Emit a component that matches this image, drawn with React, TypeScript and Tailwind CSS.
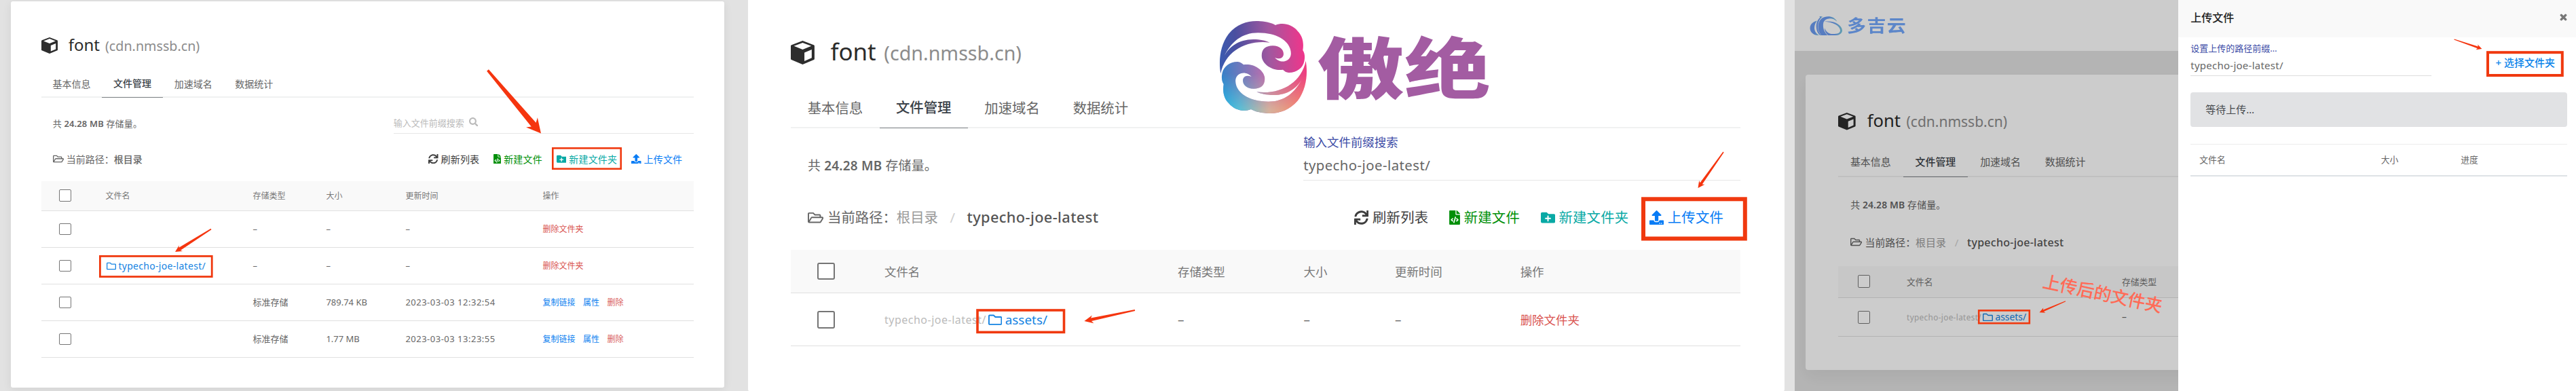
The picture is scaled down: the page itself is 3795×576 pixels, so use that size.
import type { ReactNode } from 'react'
import {
  FaFileCode,
  FaFolderPlus,
  FaRegFolder,
  FaRegFolderOpen,
  FaSearch,
  FaSync,
  FaTimes,
  FaUpload,
} from 'react-icons/fa'
import { clsx } from 'clsx'

const tabs = ['基本信息', '文件管理', '加速域名', '数据统计']
const columns = ['文件名', '存储类型', '大小', '更新时间', '操作']

interface FileRow {
  name?: string
  prefix?: string
  type: string
  size: string
  time: string
  folder: boolean
}

const rootRows: FileRow[] = [
  { type: '–', size: '–', time: '–', folder: true },
  { name: 'typecho-joe-latest/', type: '–', size: '–', time: '–', folder: true },
  { type: '标准存储', size: '789.74 KB', time: '2023-03-03 12:32:54', folder: false },
  { type: '标准存储', size: '1.77 MB', time: '2023-03-03 13:23:55', folder: false },
]

const nestedRows: FileRow[] = [
  { prefix: 'typecho-joe-latest/', name: 'assets/', type: '–', size: '–', time: '–', folder: true },
]

export default function App() {
  return (
    <div className="relative flex h-[576px] w-[3795px] overflow-hidden bg-[#e2e2e2] font-['Noto_Sans','Noto_Sans_CJK_SC',sans-serif] text-[#666]">
      <section className="w-[1102px] pl-[16.4px] pt-[2px]">
        <div className="h-[569px] w-[1050.4px] rounded-[3px] bg-white shadow-[0_3px_14px_rgba(0,0,0,0.07)]">
          <div className="pl-[44.3px] pt-[53px]">
            <Bucket rows={rootRows} />
          </div>
        </div>
      </section>

      <section className="w-[1542px]">
        <div className="h-[577px] w-[1527px] rounded-b-[4px] bg-white">
          <div className="pl-[43.5px] pt-[41.2px] [zoom:1.4545]">
            <Bucket rows={nestedRows} nested />
          </div>
        </div>
      </section>

      <section className="relative h-full w-[565.3px] overflow-hidden">
        <header className="flex h-[74.7px] items-center bg-white pl-[22px]">
          <CloudLogo />
          <span className="ml-[6px] scale-y-[0.9] text-[28px] font-bold leading-none tracking-[1.4px] text-[#74a8fc]">
            多吉云
          </span>
        </header>
        <div className="mt-[35.3px] ml-[16px] h-[435px] w-[600px] rounded-[4px] bg-white shadow-[0_10px_24px_rgba(0,0,0,0.06)]">
          <div className="pl-[45px] pt-[52.5px] [zoom:1.067]">
            <Bucket rows={nestedRows} nested narrow />
          </div>
        </div>
        <div className="absolute inset-0 bg-black/20" />
      </section>

      <UploadDrawer />

      <div className="absolute left-[1796px] top-[30px] flex">
        <SwirlLogo />
        <span className="ml-[14px] mt-[20px] h-[98px] w-[260px] origin-left scale-x-[1.31] whitespace-nowrap text-[98px] font-black leading-[98px] text-[#a35ca2]">
          傲绝
        </span>
      </div>

      <Marks />
      <span className="absolute left-[3008px] top-[417px] rotate-[12deg] whitespace-nowrap text-[25.6px] font-medium leading-[32px] text-[#ff6b57]">
        上传后的文件夹
      </span>
    </div>
  )
}

interface BucketProps {
  rows: FileRow[]
  nested?: boolean
  narrow?: boolean
}

function Bucket({ rows, nested, narrow }: BucketProps) {
  return (
    <div className="w-[961.5px]">
      <div className="flex h-[24px] items-center">
        <CubeIcon />
        <h1 className="ml-[16px] flex items-baseline gap-[8px] text-[24px] leading-[24px] text-[#2b2b2b]">
          font
          <small className="text-[19.7px] text-[#8c8c8c]">(cdn.nmssb.cn)</small>
        </h1>
      </div>

      <nav className="mt-[24px] flex h-[41px] border-b-2 border-[#f0f1f1]">
        {tabs.map((tab, i) => (
          <span
            key={tab}
            className={clsx(
              'flex h-[41px] w-[89.6px] items-center justify-center pb-px text-[14px]',
              i === 1 ? 'border-b border-[#808488] font-medium text-[#3b4249]' : 'text-[#666]',
            )}
          >
            {tab}
          </span>
        ))}
      </nav>

      <div className="flex h-[72px]">
        <p className="w-[519px] pl-[17px] pt-[28px] text-[13px] leading-[20px] tracking-[0.15px]">
          共 <b className="font-semibold">24.28 MB</b> 存储量。
        </p>
        {!narrow && <SearchBox value={nested ? 'typecho-joe-latest/' : undefined} />}
      </div>

      <div className="flex h-[36px] items-center justify-between px-[17px] text-[14px]">
        <div className="flex items-center">
          <FaRegFolderOpen className="mr-[4px] h-[16px] w-[16px]" />
          当前路径：
          {nested ? (
            <>
              <span className="text-[#9a9a9a]">根目录</span>
              <span className="mx-[12px] text-[#d0d0d0]">/</span>
              <span className="text-[15px] font-medium tracking-[0.25px] text-[#555]">typecho-joe-latest</span>
            </>
          ) : (
            <span className="font-medium">根目录</span>
          )}
        </div>
        {!narrow && (
          <div className="flex gap-[21px]">
            <Action icon={<FaSync className="size-[14.5px]" />} label="刷新列表" className="text-[#3e3e3e]" />
            <Action icon={<FaFileCode className="h-[14.5px] w-[11px]" />} label="新建文件" className="text-[#008f08]" />
            <Action icon={<FaFolderPlus className="size-[14.5px]" />} label="新建文件夹" className="text-[#08a9a5]" />
            <Action icon={<FaUpload className="size-[14.5px]" />} label="上传文件" className="text-[#087cf5]" />
          </div>
        )}
      </div>

      <div className="mt-[15px]">
        <Row nested={nested} className="h-[43.5px] bg-[#f9f9f9] text-[12px] text-[#777]">
          {columns.slice(0, narrow ? 2 : 5).map((c) => (
            <span key={c} className="pt-[1px]">{c}</span>
          ))}
        </Row>
        {rows.map((row, i) => (
          <Row key={i} nested={nested} className="h-[54px] pt-[1px] text-[13px]">
            <span className="flex items-center whitespace-nowrap">
              {row.prefix && <span className="w-[105.2px] text-[11px] tracking-[0.35px] text-[#bbb]">{row.prefix}</span>}
              {row.name && (
                <span
                  className={clsx(
                    'flex items-center gap-[3px] text-[#1583e2]',
                    row.prefix ? 'text-[13px]' : 'pl-[2px] text-[14px] tracking-[0.3px]',
                  )}
                >
                  <FaRegFolder className="size-[14px]" />
                  {row.name}
                </span>
              )}
            </span>
            <span>{row.type}</span>
            {!narrow && (
              <>
                <span>{row.size}</span>
                <span className="tracking-[0.5px]">{row.time}</span>
                {row.folder ? (
                  <span className="text-[12px] text-[#d9534f]">删除文件夹</span>
                ) : (
                  <span className="flex gap-[11.5px] text-[12px] text-[#0b7ff0]">
                    <a>复制链接</a>
                    <a>属性</a>
                    <a className="text-[#d9605c]">删除</a>
                  </span>
                )}
              </>
            )}
          </Row>
        ))}
      </div>
    </div>
  )
}

function Row({ nested, className, children }: { nested?: boolean; className: string; children: ReactNode }) {
  return (
    <div
      className={clsx(
        'grid items-center border-b border-[#e0e0e0]',
        nested ? 'grid-cols-[94.7px_297px_127.6px_92.4px_127px_1fr]' : 'grid-cols-[94.7px_217px_108px_117px_202px_1fr]',
        className,
      )}
    >
      <span className="ml-[26.8px] size-[17.6px] rounded-[2px] border-[1.6px] border-[#757575] bg-white" />
      {children}
    </div>
  )
}

function SearchBox({ value }: { value?: string }) {
  if (value) {
    return (
      <div className="h-[53px] flex-1 border-b border-[#e6e6e6] pt-[4px] leading-[20px]">
        <label className="block text-[12px] text-[#3c4ba6]">输入文件前缀搜索</label>
        <p className="mt-[3px] text-[14px] tracking-[0.3px]">{value}</p>
      </div>
    )
  }
  return (
    <div className="flex h-[53px] flex-1 items-start gap-[7px] border-b border-[#e6e6e6] pt-[26.5px] text-[13px] leading-[20px] text-[#bbb]">
      输入文件前缀搜索
      <FaSearch className="mt-[2px] size-[13.5px]" />
    </div>
  )
}

function Action({ icon, label, className }: { icon: ReactNode; label: string; className: string }) {
  return (
    <span className={clsx('flex items-center gap-[4px] whitespace-nowrap tracking-[0.15px]', className)}>
      {icon}
      {label}
    </span>
  )
}

function UploadDrawer() {
  return (
    <aside className="h-full flex-1 bg-white">
      <header className="flex h-[54.7px] items-center justify-between bg-[#f9f9f9] pb-[3px] pl-[18px] pr-[12px]">
        <h2 className="text-[16px] font-medium text-[#222]">上传文件</h2>
        <FaTimes className="size-[13px] stroke-[#777] stroke-[40px] text-[#777]" />
      </header>
      <div className="pl-[18px] pr-[13px]">
        <div className="flex h-[81px] justify-between">
          <div className="h-[57.5px] w-[354.5px] border-b border-[#ddd] pt-[6px] leading-[20px]">
            <label className="block text-[13px] text-[#3c4ba6]">设置上传的路径前缀…</label>
            <p className="mt-[5px] text-[15px] tracking-[0.25px]">typecho-joe-latest/</p>
          </div>
          <button className="mt-[19px] h-[38px] self-start pr-[18px] text-[15px] font-medium text-[#0b84ea]">
            + 选择文件夹
          </button>
        </div>
        <div className="flex h-[51.3px] items-center rounded-[4px] bg-[#e1e2e4] pl-[22px] text-[15px] text-[#45494d]">
          等待上传…
        </div>
        <div className="mt-[25px] grid h-[48px] grid-cols-[267.5px_117.5px_1fr] items-center border-b-2 border-t border-b-[#dee2e6] border-t-[#ececec] pl-[13px] text-[12.8px]">
          <span>文件名</span>
          <span>大小</span>
          <span>进度</span>
        </div>
      </div>
    </aside>
  )
}

function CubeIcon() {
  return (
    <svg viewBox="0 0 24 24" className="size-[24px] shrink-0" fill="#2d2d2d" fillRule="evenodd">
      <path d="M12 0 23.2 4.3Q24 4.6 24 5.4V18.4Q24 19 23.4 19.3L12 24 .6 19.3Q0 19 0 18.4V5.4Q0 4.6.8 4.3ZM3.2 5.4 12 8.9 20.8 5.4 12 2.1ZM13.8 12V20.6L21.2 17.4V8.9Z" />
    </svg>
  )
}

function CloudLogo() {
  return (
    <svg viewBox="46 31 148 92" className="h-[31px] w-[49px] shrink-0">
      <defs>
        <linearGradient id="cloud" x1="0" x2="1">
          <stop offset="0" stopColor="#6f9cf0" />
          <stop offset="0.55" stopColor="#6a9cf0" />
          <stop offset="1" stopColor="#79c8dc" />
        </linearGradient>
      </defs>
      <g fill="url(#cloud)">
        <path d="M79 56C36 66 38 114 80 121L88 121C62 106 62 78 79 56Z" />
        <path d="M90 36 104 38C76 56 78 104 98 121L93 121C72 104 68 62 92 42Z" />
        <path d="M100 45C122 31 156 34 168 60C144 36 112 46 107 66C103 88 112 110 126 121L98 121C78 98 80 60 100 45Z" />
        <path fillRule="evenodd" d="M112 60C152 53 190 74 191 99C191 116 174 122 152 121L128 121C118 112 112 100 112 88C120 106 130 114 150 115C170 115 182 111 182 98C180 78 148 62 112 60Z" />
      </g>
    </svg>
  )
}

const wave =
  'M115 325C105 270 112 200 150 150C190 103 240 90 290 94C320 96 340 102 357 111C390 98 430 107 455 137C478 160 483 190 478 222C490 240 486 262 484 272C478 300 450 322 415 321C405 320 397 315 390 308C350 315 305 290 297 255C292 220 312 202 345 202C380 202 397 225 392 245C387 260 370 262 355 255C365 268 385 275 400 270C425 262 430 240 422 215C410 180 365 145 280 145C210 145 160 185 130 250C150 205 200 170 270 174C300 176 320 182 332 188C230 175 135 225 115 325Z'

function SwirlLogo() {
  return (
    <svg viewBox="108 90 390 414" className="h-[138px] w-[130px] shrink-0">
      <defs>
        <linearGradient id="top" gradientUnits="userSpaceOnUse" x1="110" y1="240" x2="480" y2="220">
          <stop offset="0" stopColor="#3b5bb0" />
          <stop offset="0.2" stopColor="#4a4fa0" />
          <stop offset="0.6" stopColor="#a2579f" />
          <stop offset="1" stopColor="#ee368b" />
        </linearGradient>
        {/* the lower wave is the upper one turned by 180deg, so its gradients run right to left */}
        <linearGradient id="low" gradientUnits="userSpaceOnUse" x1="490" y1="0" x2="115" y2="0">
          <stop offset="0" stopColor="#3580c8" />
          <stop offset="0.48" stopColor="#b070b0" />
          <stop offset="1" stopColor="#ee3f80" />
        </linearGradient>
        <linearGradient id="glow" gradientUnits="userSpaceOnUse" x1="480" y1="0" x2="140" y2="0">
          <stop offset="0" stopColor="#25b8e4" />
          <stop offset="0.22" stopColor="#5bbfd4" />
          <stop offset="0.6" stopColor="#d6b09c" />
          <stop offset="1" stopColor="#f58a6c" />
        </linearGradient>
        <linearGradient id="fade" gradientUnits="userSpaceOnUse" x1="0" y1="110" x2="0" y2="270">
          <stop offset="0" stopColor="#fff" />
          <stop offset="1" stopColor="#000" />
        </linearGradient>
        <mask id="lowMask" maskUnits="userSpaceOnUse" x="100" y="80" width="400" height="430">
          <rect x="100" y="80" width="400" height="430" fill="url(#fade)" />
        </mask>
      </defs>
      <path d={wave} fill="url(#top)" />
      <g transform="rotate(180 303 297)">
        <path d={wave} fill="url(#low)" />
        <path d={wave} fill="url(#glow)" mask="url(#lowMask)" />
      </g>
    </svg>
  )
}

interface ArrowProps {
  from: [number, number]
  to: [number, number]
  head: number
  spread: number
  shaft: number
}

function Arrow({ from, to, head, spread, shaft }: ArrowProps) {
  const len = Math.hypot(to[0] - from[0], to[1] - from[1])
  const ux = (to[0] - from[0]) / len
  const uy = (to[1] - from[1]) / len
  const at = (along: number, side: number) => `${from[0] + ux * along - uy * side},${from[1] + uy * along + ux * side}`
  const points = [
    at(0, -shaft / 5),
    at(len - head * 0.8, -shaft / 2),
    at(len - head, -spread),
    at(len, 0),
    at(len - head, spread),
    at(len - head * 0.8, shaft / 2),
    at(0, shaft / 5),
  ]
  return <polygon points={points.join(' ')} fill="#f5350f" />
}

function Marks() {
  return (
    <svg viewBox="0 0 3795 576" className="pointer-events-none absolute inset-0 h-[576px] w-[3795px]">
      <g fill="none" stroke="#f0390f">
        <rect x="814.3" y="218.3" width="100.4" height="30.4" strokeWidth="2.6" />
        <rect x="147.4" y="377.4" width="164.8" height="30.2" strokeWidth="2.8" />
        <rect x="1440" y="457" width="127.5" height="32.4" strokeWidth="3.6" />
        <rect x="2421" y="293.3" width="149.8" height="58.2" strokeWidth="6" />
        <rect x="2915.2" y="457.4" width="74.6" height="18.8" strokeWidth="2.6" />
        <rect x="3665" y="77.2" width="109.8" height="33.8" strokeWidth="4" />
      </g>
      <Arrow from={[718.5, 103.5]} to={[797, 196.5]} head={21} spread={11} shaft={9} />
      <Arrow from={[311, 337.5]} to={[258, 371]} head={10} spread={5} shaft={4.5} />
      <Arrow from={[1672, 457]} to={[1597.4, 473]} head={13} spread={6} shaft={4.5} />
      <Arrow from={[2539, 224]} to={[2501.5, 277]} head={10} spread={5} shaft={4} />
      <Arrow from={[3043, 443.7]} to={[3004.5, 460.3]} head={8} spread={4} shaft={2.6} />
      <Arrow from={[3615.5, 58]} to={[3656.4, 72]} head={8} spread={4} shaft={3} />
    </svg>
  )
}
